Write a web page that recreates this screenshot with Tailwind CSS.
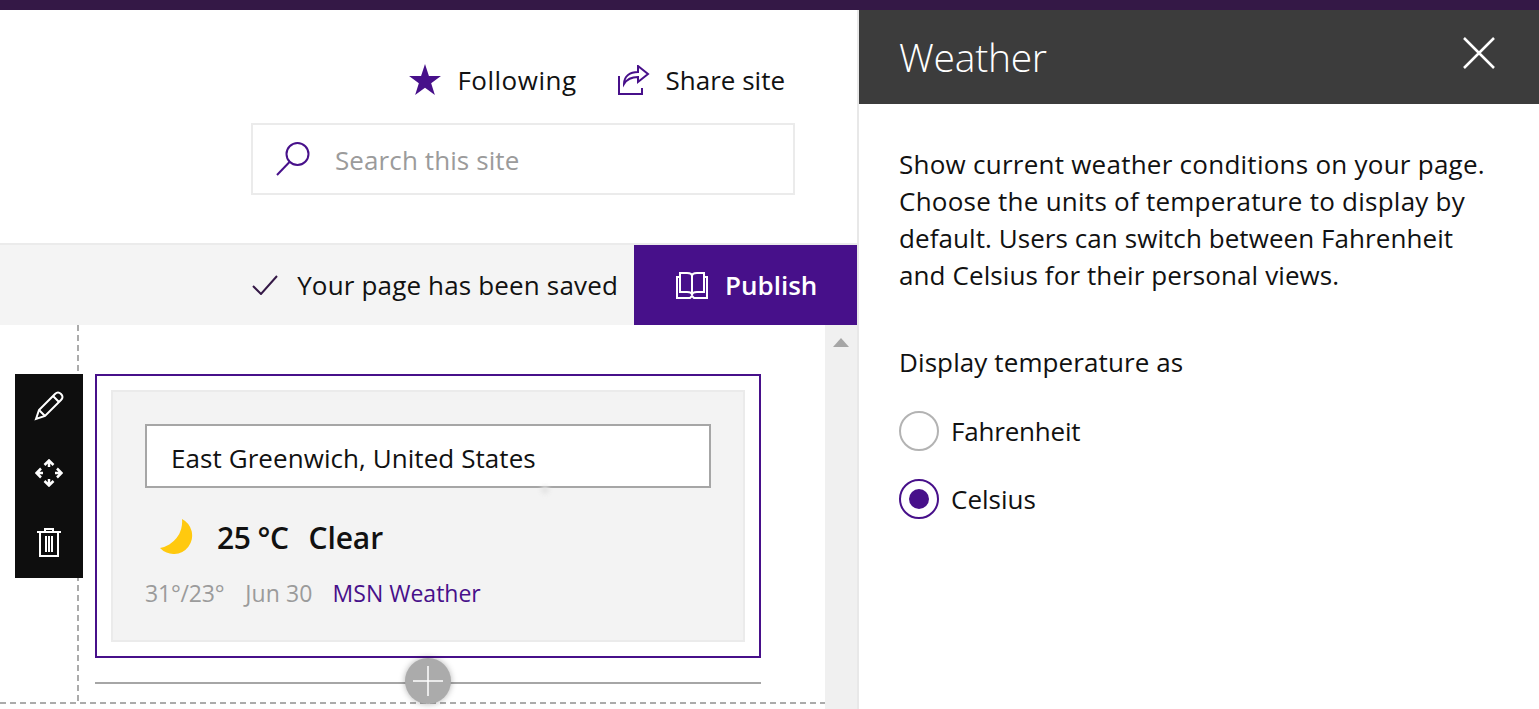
<!DOCTYPE html>
<html lang="en">

<head>
  <meta charset="UTF-8">
  <title>Weather</title>
  <script src="https://cdn.jsdelivr.net/npm/@tailwindcss/browser@4"></script>
</head>

<body class="bg-white overflow-hidden font-['Open_Sans','Noto_Sans',sans-serif] text-[#111]">
  <div class="h-[709px] w-[1539px] flex flex-col overflow-hidden">
    <!-- Suite bar -->
    <div class="h-[10px] bg-[#341846] shrink-0"></div>

    <div class="flex flex-1 min-h-0">
      <!-- Page side -->
      <div class="w-[859px] shrink-0 border-r-2 border-[#e8e8e8] flex flex-col">

        <!-- Site header -->
        <div class="h-[235px] shrink-0 border-b-2 border-[#ebebeb] flex flex-col items-end pr-[62px] pt-[52px]">
          <div class="flex items-center h-[36px] text-[26px] mr-[10px]">
            <svg class="w-[34px] h-[34px] mr-[15px]" viewBox="0 0 32 32"><path fill="#47108a" d="M16 1l3.700 11.200H31l-9.200 6.800 3.500 11.200L16 23.300 6.700 30.200 10.200 19 1 12.200h11.300z"/></svg>
            <span class="mr-[40px] tracking-[0.5px]">Following</span>
            <svg class="w-[33px] h-[30px] mr-[16px]" viewBox="0 0 33 30" fill="none" stroke="#47108a" stroke-width="2"><path d="M2 11v18h23v-6"/><path d="M7 24c0-8 6-12 14-12V6l10 8-10 8v-5c-6 0-11 2-14 7z" transform="translate(0 -5)"/></svg>
            <span>Share site</span>
          </div>
          <div class="mt-[25px] w-[544px] h-[72px] border-2 border-[#ebebeb] flex items-center pl-[22px]">
            <svg class="w-[36px] h-[36px] mr-[24px]" viewBox="0 0 36 36" fill="none" stroke="#47108a" stroke-width="2"><circle cx="22.500" cy="13" r="11"/><path d="M14.500 21L2 34"/></svg>
            <span class="text-[26px] tracking-[0.1px] text-[#9b9b9b] translate-y-[1px]">Search this site</span>
          </div>
        </div>

        <!-- Save bar -->
        <div class="h-[80px] shrink-0 bg-[#f4f4f4] flex items-center justify-end">
          <svg class="w-[26px] h-[20px] mr-[19px]" viewBox="0 0 26 20" fill="none" stroke="#341846" stroke-width="2"><path d="M1 11l8 8L25 1"/></svg>
          <span class="text-[26px] tracking-[0.16px] mr-[16px]">Your page has been saved</span>
          <div class="w-[223px] h-full bg-[#47108a] flex items-center pl-[42px] text-white">
            <svg class="w-[32px] h-[28px] mr-[17px]" viewBox="0 0 32 28" fill="none" stroke="#fff" stroke-width="2"><path d="M4 2h7c3 0 5 1 5 3v19c0-2-2-3-5-3H4z"/><path d="M28 2h-7c-3 0-5 1-5 3v19c0-2 2-3 5-3h7z"/><path d="M4 6H1v21h13l2-2 2 2h13V6h-3"/></svg>
            <span class="text-[26px] font-semibold">Publish</span>
          </div>
        </div>

        <!-- Canvas -->
        <div class="flex-1 min-h-0 flex">
          <div class="relative w-[825px] shrink-0">
            <div class="absolute left-[77px] top-0 h-[377px] w-[2px] bg-[repeating-linear-gradient(180deg,#ababab_0_6px,transparent_6px_10px)]"></div>
            <div class="absolute left-0 top-[377px] w-[825px] h-[2px] bg-[repeating-linear-gradient(90deg,#ababab_0_6px,transparent_6px_10px)]"></div>

            <!-- Edit toolbar -->
            <div class="absolute left-[15px] top-[49px] w-[68px] h-[204px] bg-[#0e0e0e] flex flex-col items-center text-white">
              <svg class="w-[30px] h-[30px] mt-[17px]" viewBox="0 0 30 30" fill="none" stroke="#fff" stroke-width="2"><path d="M2 28l3-9L21 3c2-2 4-2 6 0s2 4 0 6L11 25z"/><path d="M5 19l6 6M19 5l6 6"/></svg>
              <svg class="w-[28px] h-[28px] mt-[38px]" viewBox="0 0 28 28" fill="none" stroke="#fff" stroke-width="2.500"><path d="M14 2v6M9.500 6L14 1.500 18.500 6M14 20v6M9.500 22l4.500 4.500 4.500-4.500M2 14h6M6 9.500L1.500 14 6 18.500M20 14h6M22 9.500l4.500 4.500-4.500 4.500"/></svg>
              <svg class="w-[26px] h-[30px] mt-[40px]" viewBox="0 0 26 30" fill="none" stroke="#fff" stroke-width="2"><path d="M1 5h24M9 5V2h8v3M4 5v24h18V5M10 9v16M13 9v16M16 9v16"/></svg>
            </div>

            <!-- Weather web part -->
            <div class="absolute left-[95px] top-[49px] w-[666px] h-[284px] border-2 border-[#47108a] p-[14px]">
              <div class="h-full bg-[#f3f3f3] border-2 border-[#ebebeb] px-[32px] pt-[32px] relative">
                <div class="h-[64px] border-2 border-[#a6a6a6] bg-white flex items-center pl-[24px] text-[26px] tracking-[0.07px]"><span class="translate-y-[2px]">East Greenwich, United States</span></div>
                <div class="absolute left-[428px] top-[94px] w-[8px] h-[8px] rounded-full bg-[#e4e4e4] blur-[2px]"></div>
                <div class="flex items-center mt-[26px] h-[48px]">
                  <svg class="w-[36px] h-[36px] ml-[14px] mr-[22px] -translate-y-[2px] blur-[0.5px]" viewBox="0 0 36 36"><path fill="#ffc90e" d="M23 1A18.500 18.500 0 1 1 1 30 26.600 26.600 0 0 0 23 1z"/></svg>
                  <span class="text-[30px] font-semibold tracking-[-0.5px] -translate-y-[1px]">25 °C</span>
                  <span class="text-[30px] font-semibold tracking-[-0.1px] ml-[20px] -translate-y-[1px]">Clear</span>
                </div>
                <div class="flex mt-[14px] text-[23px]">
                  <span class="text-[#9b9b9b] tracking-[-0.2px]">31°/23°</span>
                  <span class="text-[#9b9b9b] ml-[21px] tracking-[0.1px]">Jun 30</span>
                  <span class="text-[#47108a] ml-[20px]">MSN Weather</span>
                </div>
              </div>
            </div>

            <!-- Add section -->
            <div class="absolute left-[95px] top-[357px] w-[666px] h-[2px] bg-[#a6a6a6]"></div>
            <div class="absolute left-[405px] top-[333px] w-[46px] h-[46px] rounded-full bg-[#ababab] shadow-[0_0_6px_rgba(0,0,0,0.3)] flex items-center justify-center">
              <svg class="w-[30px] h-[30px]" viewBox="0 0 30 30" stroke="#fff" stroke-width="1.500"><path d="M0 15h30M15 0v30"/></svg>
            </div>
          </div>

          <!-- Scrollbar -->
          <div class="w-[32px] bg-[#f0f0f0] flex justify-center pt-[13px]">
            <svg class="w-[16px] h-[9px]" viewBox="0 0 16 9"><path fill="#a6a6a6" d="M8 0l8 9H0z"/></svg>
          </div>
        </div>
      </div>

      <!-- Property pane -->
      <div class="flex-1 min-w-0 flex flex-col">
        <div class="h-[94px] bg-[#3c3c3c] flex items-center justify-between pl-[40px] pr-[44px] text-white shrink-0">
          <span class="text-[39px] font-light tracking-[-0.25px]">Weather</span>
          <svg class="w-[32px] h-[32px] mb-[8px]" viewBox="0 0 32 32" stroke="#fff" stroke-width="2.500"><path d="M1 1l30 30M31 1L1 31"/></svg>
        </div>
        <div class="pl-[40px] pt-[42px]">
          <div class="text-[26px] leading-[37px] w-[620px]">
            <p class="tracking-[0.25px]">Show current weather conditions on your page.</p>
            <p class="tracking-[0.25px]">Choose the units of temperature to display by</p>
            <p class="tracking-[0.07px]">default. Users can switch between Fahrenheit</p>
            <p class="tracking-[0.1px]">and Celsius for their personal views.</p>
          </div>
          <p class="text-[26px] leading-[37px] mt-[50px] tracking-[0.1px]">Display temperature as</p>
          <div class="flex items-center mt-[30px] h-[40px]">
            <div class="w-[40px] h-[40px] rounded-full border-2 border-[#b3b3b3] mr-[12px]"></div>
            <span class="text-[26px] tracking-[-0.2px]">Fahrenheit</span>
          </div>
          <div class="flex items-center mt-[28px] h-[40px]">
            <div class="w-[40px] h-[40px] rounded-full border-2 border-[#47108a] mr-[12px] flex items-center justify-center">
              <div class="w-[20px] h-[20px] rounded-full bg-[#47108a]"></div>
            </div>
            <span class="text-[26px]">Celsius</span>
          </div>
        </div>
      </div>
    </div>
  </div>
</body>

</html>
